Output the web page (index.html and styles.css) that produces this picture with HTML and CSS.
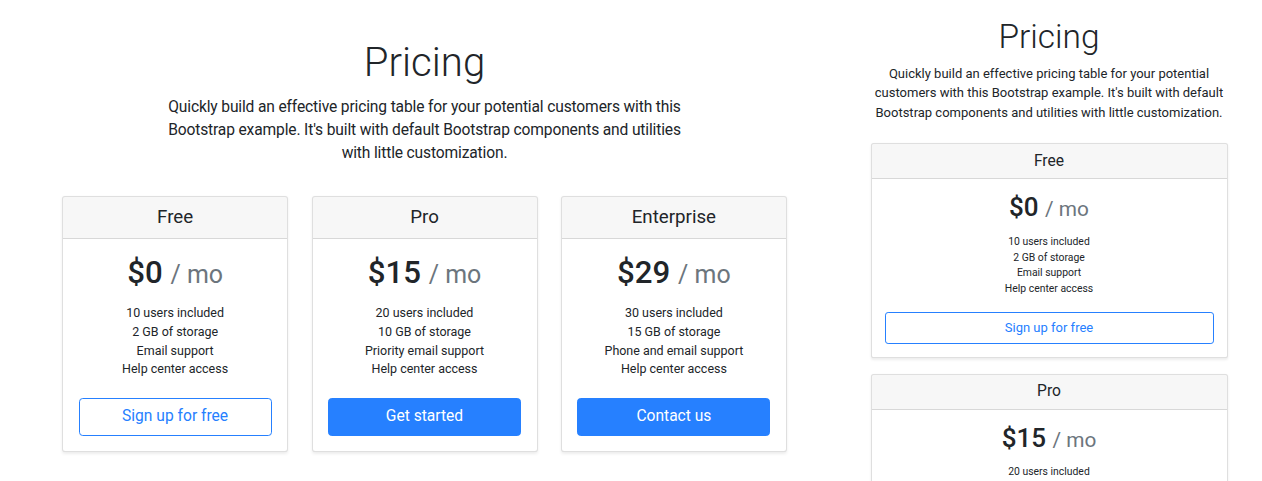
FILE: index.html
```html
<!DOCTYPE html>
<html lang="en">
<head>
<meta charset="utf-8">
<title>Pricing</title>
<link rel="stylesheet" href="styles.css">
</head>
<body>
<div class="page">
  <section class="view view-desktop">
    <header class="pricing-header">
      <h1 class="title">Pricing</h1>
      <p class="lead">Quickly build an effective pricing table for your potential customers with this Bootstrap example. It's built with default Bootstrap components and utilities with little customization.</p>
    </header>
    <div class="deck">
      <div class="card">
        <div class="card-header"><h4 class="plan">Free</h4></div>
        <div class="card-body">
          <h1 class="price">$0 <small>/ mo</small></h1>
          <ul class="features">
            <li>10 users included</li>
            <li>2 GB of storage</li>
            <li>Email support</li>
            <li>Help center access</li>
          </ul>
          <button type="button" class="btn btn-outline">Sign up for free</button>
        </div>
      </div>
      <div class="card">
        <div class="card-header"><h4 class="plan">Pro</h4></div>
        <div class="card-body">
          <h1 class="price">$15 <small>/ mo</small></h1>
          <ul class="features">
            <li>20 users included</li>
            <li>10 GB of storage</li>
            <li>Priority email support</li>
            <li>Help center access</li>
          </ul>
          <button type="button" class="btn btn-primary">Get started</button>
        </div>
      </div>
      <div class="card">
        <div class="card-header"><h4 class="plan">Enterprise</h4></div>
        <div class="card-body">
          <h1 class="price">$29 <small>/ mo</small></h1>
          <ul class="features">
            <li>30 users included</li>
            <li>15 GB of storage</li>
            <li>Phone and email support</li>
            <li>Help center access</li>
          </ul>
          <button type="button" class="btn btn-primary">Contact us</button>
        </div>
      </div>
    </div>
  </section>

  <section class="view view-mobile">
    <header class="pricing-header">
      <h1 class="title">Pricing</h1>
      <p class="lead">Quickly build an effective pricing table for your potential customers with this Bootstrap example. It's built with default Bootstrap components and utilities with little customization.</p>
    </header>
    <div class="deck">
      <div class="card">
        <div class="card-header"><h4 class="plan">Free</h4></div>
        <div class="card-body">
          <h1 class="price">$0 <small>/ mo</small></h1>
          <ul class="features">
            <li>10 users included</li>
            <li>2 GB of storage</li>
            <li>Email support</li>
            <li>Help center access</li>
          </ul>
          <button type="button" class="btn btn-outline">Sign up for free</button>
        </div>
      </div>
      <div class="card">
        <div class="card-header"><h4 class="plan">Pro</h4></div>
        <div class="card-body">
          <h1 class="price">$15 <small>/ mo</small></h1>
          <ul class="features">
            <li>20 users included</li>
            <li>10 GB of storage</li>
            <li>Priority email support</li>
            <li>Help center access</li>
          </ul>
          <button type="button" class="btn btn-primary">Get started</button>
        </div>
      </div>
    </div>
  </section>
</div>
</body>
</html>
```
FILE: styles.css
```css
* { box-sizing: border-box; }
html, body { margin: 0; padding: 0; overflow: hidden; background: #fff; }
body { font-family: Roboto, "Liberation Sans", sans-serif; color: #212529; }

.page { display: flex; align-items: flex-start; }

.view { font-size: calc(16px * var(--s)); line-height: 1.5; flex: none; }
.view-desktop { --s: 0.78; width: 849px; }
.view-mobile { --s: 0.65; width: 374px; margin-left: 13px; }

.pricing-header {
  max-width: calc(700px * var(--s));
  margin: 0 auto;
  padding: calc(48px * var(--s)) calc(16px * var(--s)) calc(24px * var(--s));
  text-align: center;
}
.view-desktop .pricing-header { padding-top: 37px; padding-bottom: 18px; }
.view-desktop .lead { letter-spacing: -0.15px; }
.view-mobile .pricing-header { padding-top: 15px; padding-bottom: calc(16px * var(--s)); }

.title {
  font-size: calc(51.5px * var(--s));
  font-weight: 300;
  line-height: calc(67.2 / 51.5);
  margin: 0 0 calc(8px * var(--s));
}
.lead {
  font-size: calc(20px * var(--s));
  font-weight: 400;
  margin: 0 0 calc(16px * var(--s));
}

.deck { display: flex; justify-content: center; gap: calc(30px * var(--s)); text-align: center; }
.view-desktop .card { width: 226px; }
.view-mobile .deck { flex-direction: column; gap: calc(24px * var(--s)); padding: 0 8.5px; }

.card {
  background: #fff;
  border: 1px solid rgba(0, 0, 0, .125);
  border-radius: calc(4px * var(--s));
  box-shadow: 0 calc(2px * var(--s)) calc(4px * var(--s)) rgba(0, 0, 0, .075);
  overflow: hidden;
  display: flex;
  flex-direction: column;
}
.card-header {
  padding: calc(12px * var(--s)) calc(20px * var(--s));
  background: rgba(0, 0, 0, .03);
  border-bottom: 1px solid rgba(0, 0, 0, .125);
}
.view-desktop .card-header { padding-top: 9px; padding-bottom: 9px; }
.plan { margin: 0; font-size: calc(24px * var(--s)); font-weight: 400; line-height: 1.2; }

.card-body { padding: calc(20px * var(--s)); flex: 1; display: flex; flex-direction: column; }
.price { margin: 0; font-size: calc(40px * var(--s)); font-weight: 500; line-height: 1.2; }
.price small { font-size: 80%; font-weight: 400; color: #6c757d; }

.features { list-style: none; padding: 0; margin: calc(16px * var(--s)) 0 calc(24px * var(--s)); }

.btn {
  display: block;
  width: 100%;
  font-family: inherit;
  font-size: calc(20px * var(--s));
  font-weight: 400;
  line-height: 1.5;
  padding: calc(8px * var(--s)) calc(16px * var(--s));
  border: 1px solid #2680ff;
  border-radius: calc(4.8px * var(--s));
  cursor: pointer;
}
.btn-outline { background: #fff; color: #2680ff; }
.btn-primary { background: #2680ff; color: #fff; }
```
